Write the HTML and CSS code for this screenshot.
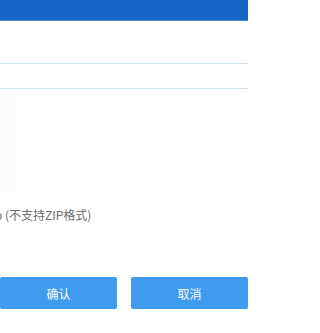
FILE: index.html
```html
<!DOCTYPE html>
<html lang="zh">
<head>
<meta charset="utf-8">
<link rel="stylesheet" href="styles.css">
</head>
<body>
<div class="page">
  <div class="header"></div>
  <div class="row row-tall"></div>
  <div class="row row-short"></div>
  <div class="upload">
    <div class="drop"></div>
    <div class="hint"><span class="cut">o</span> (不支持ZIP格式)</div>
  </div>
  <div class="actions">
    <button class="btn">确认</button>
    <button class="btn">取消</button>
  </div>
</div>
</body>
</html>
```
FILE: styles.css
```css
html, body {
  margin: 0;
  padding: 0;
  background: #ffffff;
  font-family: "Noto Sans CJK SC", "Noto Sans", sans-serif;
  overflow: hidden;
}
.page {
  width: 248px;
  height: 333px;
  overflow: hidden;
}
.header {
  height: 20px;
  background: #1664c4;
  border-bottom: 1px solid #4a88d2;
}
.row {
  border-bottom: 1px solid #d0e2ee;
}
.row-tall {
  height: 42px;
}
.row-short {
  height: 24px;
}
.upload {
  padding-top: 8px;
}
.drop {
  width: 15px;
  height: 95px;
  background: #fcfcfc;
}
.hint {
  margin-top: 15px;
  height: 16px;
  line-height: 16px;
  font-size: 12px;
  color: #6b6b6b;
  white-space: nowrap;
  margin-left: -5px;
}
.actions {
  margin-top: 54px;
  display: flex;
  gap: 14px;
}
.btn {
  flex: 1;
  height: 32px;
  border: none;
  border-radius: 2px;
  background: #3e9bee;
  color: #ffffff;
  font-family: "Noto Sans CJK SC", sans-serif;
  font-size: 12px;
  padding: 0;
}
```
